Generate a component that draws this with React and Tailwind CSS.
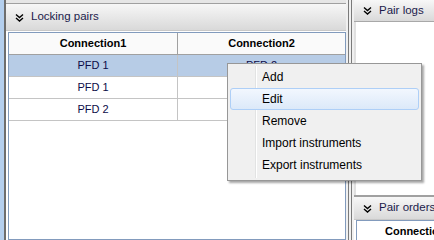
import React from 'react'

function Chevrons() {
  return (
    <svg width="9" height="9" viewBox="0 0 9 9" className="shrink-0">
      <path d="M1 1.5 L4.5 4.5 L8 1.5" fill="none" stroke="#000" strokeWidth="1.4" />
      <path d="M1 5 L4.5 8 L8 5" fill="none" stroke="#000" strokeWidth="1.4" />
    </svg>
  )
}

function PanelHeader({ title, className = '' }) {
  return (
    <div
      className={`flex shrink-0 items-center gap-[7px] pl-[9px] bg-gradient-to-b from-[#f7f7f7] to-[#d9d9d9] text-[11.5px] text-[#1b1b4b] whitespace-nowrap ${className}`}
    >
      <Chevrons />
      <span>{title}</span>
    </div>
  )
}

const rows = [
  { a: 'PFD 1', b: 'PFD 2', selected: true },
  { a: 'PFD 1', b: '' },
  { a: 'PFD 2', b: '' },
]

const menuItems = ['Add', 'Edit', 'Remove', 'Import instruments', 'Export instruments']

export default function App() {
  return (
    <div
      className="relative flex w-[434px] h-[240px] overflow-hidden bg-[#f0f0f0]"
      style={{ fontFamily: '"Liberation Sans", Arial, sans-serif' }}
    >
      {/* left window edge */}
      <div className="w-[4px] shrink-0 bg-[#b4cfee]" />
      <div className="w-[2px] shrink-0 bg-[#6e6e6e]" />

      {/* Locking pairs panel */}
      <div className="flex flex-col w-[340px] shrink-0">
        <div className="h-[4px] shrink-0 bg-[#e6e6e6] border-b border-[#a0a0a0]" />
        <PanelHeader title="Locking pairs" className="h-[27px] border-b border-[#c8c8c8]" />
        <div className="flex-1 pl-[2px] pt-[1px] bg-white">
          <div className="h-full border border-[#829bbd] bg-white text-[11px] text-[#0b0b48]">
            <div className="flex h-[22px] border-b border-[#a0a0a0] bg-[#fafafa] font-bold text-black">
              <div className="w-[169px] flex items-center justify-center border-r border-[#a0a0a0]">Connection1</div>
              <div className="flex-1 flex items-center justify-center">Connection2</div>
            </div>
            {rows.map((r, i) => (
              <div
                key={i}
                className={`flex h-[22px] border-b border-[#c4c4c4] ${r.selected ? 'bg-[#b7cce6]' : 'bg-white'}`}
              >
                <div className="w-[169px] flex items-center justify-center border-r border-[#c4c4c4]">{r.a}</div>
                <div className="flex-1 flex items-center justify-center">{r.b}</div>
              </div>
            ))}
          </div>
        </div>
      </div>

      {/* splitter */}
      <div className="flex w-[8px] shrink-0">
        <div className="w-[2px] bg-[#f0f0f0]" />
        <div className="w-[1px] bg-[#7a7a7a]" />
        <div className="w-[2px] bg-[#f0f0f0]" />
        <div className="w-[1px] bg-[#7a7a7a]" />
        <div className="w-[2px] bg-[#f0f0f0]" />
      </div>

      {/* right panels */}
      <div className="flex flex-col flex-1 min-w-0 overflow-hidden">
        <PanelHeader title="Pair logs" className="h-[22px] border-b border-[#a8a8a8]" />
        <div className="h-[173px] shrink-0 bg-white border-l-2 border-[#e0e0e0]" />
        <div className="h-[2px] shrink-0 bg-[#a0a0a0]" />
        <PanelHeader title="Pair orders" className="h-[23px] border-b border-[#c8c8c8]" />
        <div className="flex-1 bg-white pl-[2px]">
          <div className="h-full border-l border-t border-[#829bbd] pl-[28px] pt-[2px] text-[11px] font-bold whitespace-nowrap">
            Connection2
          </div>
        </div>
      </div>

      {/* context menu */}
      <div className="absolute left-[227px] top-[63px] w-[195px] h-[118px] border border-[#979797] bg-[#f0f0f0] p-[2px] shadow-[2px_2px_2px_rgba(0,0,0,0.35)]">
        <div className="absolute left-[27px] top-[2px] bottom-[2px] w-[1px] bg-[#e2e3e3]" />
        <div className="absolute left-[28px] top-[2px] bottom-[2px] w-[1px] bg-white" />
        <div className="relative flex flex-col text-[12px] text-black">
          {menuItems.map((m) =>
            m === 'Edit' ? (
              <div
                key={m}
                className="h-[22px] flex items-center pl-[31px] rounded-[3px] border border-[#aecff7] bg-gradient-to-b from-[#f2f7fe] to-[#dce9f9]"
              >
                {m}
              </div>
            ) : (
              <div key={m} className="h-[22px] flex items-center pl-[32px]">
                {m}
              </div>
            )
          )}
        </div>
      </div>
    </div>
  )
}
